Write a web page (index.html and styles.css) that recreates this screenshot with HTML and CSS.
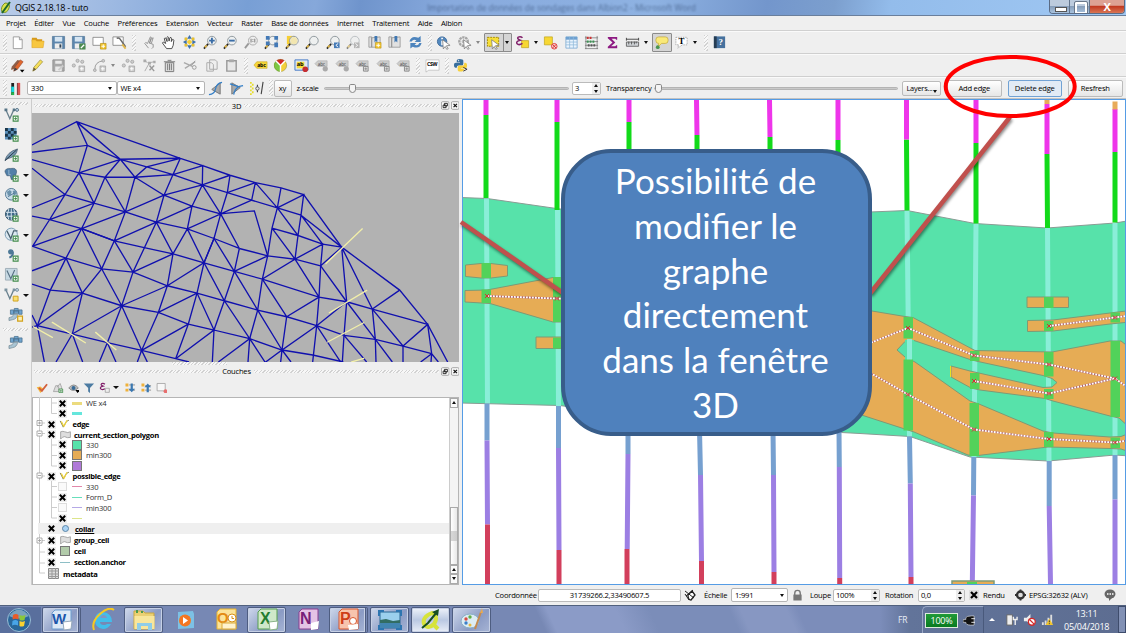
FILE: index.html
```html
<!DOCTYPE html>
<html lang="fr">
<head>
<meta charset="utf-8">
<title>QGIS 2.18.18 - tuto</title>
<link rel="stylesheet" href="styles.css">
</head>
<body>
<svg class="defs" aria-hidden="true">
<defs>
<symbol id="page" viewBox="0 0 16 16"><path d="M3.500 2h6.500l3 3v9.500h-9.500z" fill="#fff" stroke="#888" stroke-width=".8"/><path d="M10 2v3h3" fill="#ddd" stroke="#888" stroke-width=".8"/></symbol>
<symbol id="folder" viewBox="0 0 16 16"><path d="M2 3h5l1 1.500h5V7H2z" fill="#d79b1d"/><path d="M2 13.500V5h4l1 1.500h8l-1 7z" fill="#f8c740" stroke="#d79b1d" stroke-width=".5"/></symbol>
<symbol id="disk" viewBox="0 0 16 16"><path d="M1.500 1.500h13v13h-13z" fill="#5c86ad" stroke="#41678c" stroke-width=".6"/><path d="M4 2h8v5H4z" fill="#d6e5f2"/><path d="M4 9h8v5.500H4z" fill="#eee"/><path d="M9 10h2v3.500H9z" fill="#345"/></symbol>
<symbol id="disk2" viewBox="0 0 16 16"><use href="#disk"/><path d="M9 9h6.500v6.500H9z" fill="#4b8b50"/><path d="M10.500 14l3.500-3.500" stroke="#fff" stroke-width="1.500"/></symbol>
<symbol id="composer" viewBox="0 0 16 16"><path d="M1 2.500h11v8.500H1z" fill="#fff" stroke="#777" stroke-width=".8"/><path d="M9 9h6v6H9z" fill="#f2c62e" stroke="#b58c10" stroke-width=".7"/><path d="M12 10v4M10 12h4" stroke="#fff"/></symbol>
<symbol id="manager" viewBox="0 0 16 16"><path d="M1 2h11v9H1z" fill="#fff" stroke="#777" stroke-width=".8"/><path d="M5 3.500q3-1 4 1.500l5.500 7.500" fill="none" stroke="#666" stroke-width="1.500"/><path d="M11 10l3.500 4.500" stroke="#e0b74b" stroke-width="1.900"/></symbol>
<symbol id="touch" viewBox="0 0 16 16"><path d="M8 14L4 9l1-1 2 1 3-7 1 .5-2 6 4 1.500v3l-1.500 1.500M9 9l2-5 2-1-2 6" fill="#eee" stroke="#888" stroke-width=".9"/></symbol>
<symbol id="hand" viewBox="0 0 16 16"><path d="M6 14.500L1.500 8.500l1-1L5 9 3.500 4q.5-1.500 1.700-.5L6.500 7 6.300 2.500q.8-1.500 1.700 0l.6 4L9.500 3q1.200-1.200 1.700.4L11 7l1-2q1.400-.7 1.700.6L13 11l-1.500 3.500z" fill="#fff" stroke="#333" stroke-width=".9"/></symbol>
<symbol id="pan" viewBox="0 0 16 16"><path d="M8 4.500l3 3-3 3-3-3z" fill="#f6cf35"/><g fill="#3c71b0"><path d="M8 0l2.500 4h-5zM8 15l2.500-4h-5zM1 7.500L5 5v5zM15 7.500L11 5v5z"/></g><path d="M3 3h2.500v2.500H3zM10.500 3H13v2.500h-2.500zM3 9.500h2.500V12H3zM10.500 9.500H13V12h-2.500z" fill="#f6cf35" stroke="#c09b16" stroke-width=".4"/></symbol>
<symbol id="lens" viewBox="0 0 16 16"><path d="M5.500 9.500L1 14.500" stroke="#222" stroke-width="1.800"/><path d="M4 11l-2 2.300" stroke="#ddb54a" stroke-width="2"/><circle cx="9.500" cy="6" r="4.600" fill="#eef0f0" stroke="#8c959b"/></symbol>
<symbol id="zin" viewBox="0 0 16 16"><use href="#lens"/><path d="M9.500 3v6M6.500 6h6" stroke="#3a6da7" stroke-width="2"/></symbol>
<symbol id="zout" viewBox="0 0 16 16"><use href="#lens"/><path d="M6.500 6h6" stroke="#3a6da7" stroke-width="2"/></symbol>
<symbol id="zone" viewBox="0 0 16 16"><path d="M5 9L1 14" stroke="#999" stroke-width="2"/><circle cx="9.500" cy="6" r="4.700" fill="#eee" stroke="#aaa"/><path d="M7.500 4v4M9.500 4.500v1M9.500 6.500v1M11.500 4v4" stroke="#777"/></symbol>
<symbol id="zfull" viewBox="0 0 16 16"><use href="#lens"/><path d="M2 1h4v4H2zM11 1h4v4h-4zM2 7h4v4H2zM11 8h4v5h-4z" fill="#4379b6"/></symbol>
<symbol id="zsel" viewBox="0 0 16 16"><path d="M2 1h8v9H2z" fill="#f6cf35"/><use href="#lens"/><circle cx="9.500" cy="6" r="3.800" fill="#f2e6b0"/></symbol>
<symbol id="zprev" viewBox="0 0 16 16"><use href="#lens"/><path d="M8.500 8h6v6h-6z" fill="#4379b6"/><path d="M13 9l-2.500 2 2.500 2" fill="none" stroke="#fff"/></symbol>
<symbol id="znext" viewBox="0 0 16 16"><g opacity=".55"><use href="#lens"/><path d="M8.500 8h6v6h-6z" fill="#888"/><path d="M10 9l2.500 2-2.500 2" fill="none" stroke="#fff"/></g></symbol>
<symbol id="book" viewBox="0 0 16 16"><path d="M2 2h3v11H2zM5 3l9-1v11H5z" fill="#e1e1e1" stroke="#8d8d8d" stroke-width=".8"/><path d="M8 1h3v7L9.500 6.500 8 8z" fill="#4178b2"/></symbol>
<symbol id="booknew" viewBox="0 0 16 16"><use href="#book"/><path d="M9 8h6v6H9z" fill="#f3c72c" stroke="#b58c10" stroke-width=".6"/><path d="M12 9v4M10 11h4" stroke="#fff"/></symbol>
<symbol id="refresh" viewBox="0 0 16 16"><path d="M1.500 7q2-7 9.500-4l2.500-2V7.500H7l2-2Q5 4 4 7zM14.500 8.500q-2 7-9.500 4l-2.500 2V8.500H9l-2 2q4 1.500 5-2z" fill="#4d84bd"/></symbol>
<symbol id="cursor" viewBox="0 0 16 16"><path d="M6 5l8 6-4 .5 2 3-1.500.8-1.700-3-2 2.500z" fill="#fff" stroke="#777" stroke-width=".8"/></symbol>
<symbol id="info" viewBox="0 0 16 16"><circle cx="6.500" cy="7" r="5" fill="#5289c0" stroke="#416c9b"/><path d="M6.500 6v5M6.500 3v1.500" stroke="#fff" stroke-width="1.800"/><use href="#cursor" x="1"/></symbol>
<symbol id="gear" viewBox="0 0 16 16"><circle cx="7" cy="7" r="4.500" fill="#eee" stroke="#a5a5a5" stroke-width="2.500" stroke-dasharray="2.500 .7"/><circle cx="7" cy="7" r="2" fill="#bbb"/><use href="#cursor" x="1"/></symbol>
<symbol id="select" viewBox="0 0 16 16"><path d="M1.500 2.500h12v9.500h-12z" fill="#f7de35" stroke="#a58b00" stroke-dasharray="2 1"/><use href="#cursor"/></symbol>
<symbol id="eps" viewBox="0 0 16 16"><path d="M8 3Q6 1 3.500 2.200 1.500 4 5.500 5.500 1 6.500 2 9q2 2.500 6 0" fill="none" stroke="#82216b" stroke-width="1.600"/></symbol>
<symbol id="expr" viewBox="0 0 16 16"><path d="M7 6h7.500v7.500H7z" fill="#f7d733" stroke="#bb9e14" stroke-width=".7"/><use href="#eps"/></symbol>
<symbol id="desel" viewBox="0 0 16 16"><path d="M1.500 2h8.500v8.500H1.500z" fill="#f7d733" stroke="#bba011" stroke-width=".7"/><circle cx="12" cy="12" r="3" fill="#f4caca" stroke="#d44"/><path d="M10 10l4 4M14 10l-4 4" stroke="#d33"/></symbol>
<symbol id="table" viewBox="0 0 16 16"><path d="M2 2h12v12H2z" fill="#eaf4fd" stroke="#72a3cf" stroke-width=".8"/><path d="M2 2h12v3H2z" fill="#6ea1d1"/><path d="M2 7.500h12M2 10.500h12M6 2v12M10 2v12" stroke="#8eb8da" stroke-width=".8"/></symbol>
<symbol id="abacus" viewBox="0 0 16 16"><path d="M1 3h14M1 7h14M1 11h14M1 14.500h14M2 1v14M14 1v14" stroke="#777" stroke-width=".8"/><g stroke-width="2.500"><path d="M3 3h6" stroke="#c33" stroke-dasharray="2 1"/><path d="M3 7h9" stroke="#3b9353" stroke-dasharray="2 1"/><path d="M4 11h8" stroke="#555" stroke-dasharray="2 1"/></g></symbol>
<symbol id="sigma" viewBox="0 0 16 16"><path d="M13 5V2H3v1.500L8 8l-5 4.500V14h10v-3h-1l-1 1H6.500L11 8 7 4h4l1 1z" fill="#8d1a82"/></symbol>
<symbol id="ruler" viewBox="0 0 16 16"><path d="M1.500 4.500h13M1.500 3v3M14.500 3v3" stroke="#444"/><path d="M1.500 7.500h13v4.500h-13z" fill="#cfd3d7" stroke="#666"/><path d="M4 7v3M7 7v3M10 7v3M12 7v2" stroke="#555"/></symbol>
<symbol id="tip" viewBox="0 0 16 16"><path d="M5 2h7q3 0 3 3v1q0 3-3 3H8l-4 4 1-4Q2 9 2 6V5q0-3 3-3z" fill="#f9e978" stroke="#c0a331" stroke-width=".7"/><circle cx="4" cy="13" r="2" fill="#4b954e"/></symbol>
<symbol id="textann" viewBox="0 0 16 16"><path d="M2 2.500h12v8H9l-5 3.500 1-3.500H2z" fill="#fff" stroke="#aaa" stroke-dasharray="1.500 1"/><text x="4.700" y="9.500" font-size="9.500" class="serif">T</text></symbol>
<symbol id="help" viewBox="0 0 16 16"><path d="M2 1.500h12v12.500H2z" fill="#46719e"/><path d="M2 1.500h3v12.500H2z" fill="#263d53"/><text x="7" y="11" font-size="9.500" fill="#fff" class="serif">?</text></symbol>
<symbol id="pencil" viewBox="0 0 16 16"><path d="M3 14l1-4 7-8 2.500 2-7 8z" fill="#f6df59" stroke="#91832c" stroke-width=".7"/><path d="M3 14l1-4 2.500 2z" fill="#665b3f"/></symbol>
<symbol id="pencils" viewBox="0 0 16 16"><path d="M1 12.500L2 9l6-7 3 1-7 9z" fill="#8d5e49"/><path d="M4 14l1-4 6-8 3 2-6 8z" fill="#df672d" stroke="#974026" stroke-width=".6"/><path d="M4 14l1-4 3 2z" fill="#444"/><path d="M10.500 12.500h5l-2.500 3z"/></symbol>
<symbol id="gdisk" viewBox="0 0 16 16"><path d="M2 2h12v12H2z" fill="#a9a9a9" stroke="#929292"/><path d="M4.500 3h7v3h-7zM4.500 9h7v5h-7z" fill="#e9e9e9"/><path d="M8 13l5-5" stroke="#ccc" stroke-width="2"/></symbol>
<symbol id="addfeat" viewBox="0 0 16 16"><g fill="#ccc" stroke="#999" stroke-width=".7"><circle cx="3" cy="8" r="1.700"/><circle cx="7" cy="3" r="1.700"/><circle cx="12" cy="4" r="1.700"/><path d="M8.500 8.500h6v6h-6z"/></g><path d="M11.500 9.500v4M9.500 11.500h4" stroke="#fff"/></symbol>
<symbol id="curve" viewBox="0 0 16 16"><path d="M3 12Q3 4 12 3" fill="none" stroke="#999"/><g fill="#ccc" stroke="#999" stroke-width=".7"><circle cx="3" cy="13" r="1.500"/><circle cx="12" cy="3" r="1.500"/><path d="M8.500 8.500h6v6h-6z"/></g><path d="M11.500 9.500v4M9.500 11.500h4" stroke="#fff"/></symbol>
<symbol id="node" viewBox="0 0 16 16"><path d="M3 14L8 5l5-1M3 3l3 2" stroke="#aaa" fill="none"/><path d="M1.500 1.500h3v3h-3zM6.500 4h3v3h-3zM12 3h2.500v2.500H12z" fill="#aaa"/><path d="M8 8l5 6M13 8l-5 5" stroke="#999" stroke-width="1.500"/></symbol>
<symbol id="trash" viewBox="0 0 16 16"><path d="M3.500 5h9v9.500h-9z" fill="#ddd" stroke="#777"/><path d="M2 4h12M6 2.500h4M6 6v7M8 6v7M10 6v7" stroke="#777"/></symbol>
<symbol id="cut" viewBox="0 0 16 16"><path d="M1 5l9 4M2 11l11-7" stroke="#aaa" stroke-width="1.500"/><circle cx="12" cy="10" r="2" fill="none" stroke="#999"/><path d="M9 8l4-5" stroke="#999"/></symbol>
<symbol id="copy" viewBox="0 0 16 16"><path d="M6 2h6l2 2v8H6zM3 5h5l2 2v7H3z" fill="#eee" stroke="#aaa"/></symbol>
<symbol id="paste" viewBox="0 0 16 16"><path d="M3 3h10v11H3z" fill="#e8e8e8" stroke="#999" stroke-width="1.500"/><path d="M5.500 1.500h5v3h-5z" fill="#aaa"/></symbol>
<symbol id="abc" viewBox="0 0 16 16"><path d="M4 4h11v7H4L1 7.500z" fill="#f6d63c" stroke="#c6a418" stroke-width=".6"/><text x="4.500" y="9.500" font-size="5.500" font-weight="bold">abc</text></symbol>
<symbol id="pie" viewBox="0 0 16 16"><path d="M8 8L3 3q5-4 10 0z" fill="#d52824"/><path d="M8 8l5-5q4 6-1 10l-4 2z" fill="#f4d03b"/><path d="M8 8v7Q0 13 1 6l2-3z" fill="#7bc843"/><circle cx="8" cy="8" r="6.500" fill="none" stroke="#8a863a" stroke-width=".5"/><path d="M8 8v7M8 8L3 3M8 8l5-5" stroke="#fff" stroke-width="1.500"/></symbol>
<symbol id="abpin" viewBox="0 0 16 16"><path d="M1 2h14v11H1z" fill="#e0e7f2" stroke="#4178c4"/><path d="M3 4h8v7H3z" fill="#f6dc39"/><text x="3" y="9" font-size="6" font-weight="bold">ab</text><circle cx="12" cy="12" r="3" fill="#c52d30"/></symbol>
<symbol id="gabc" viewBox="0 0 16 16"><path d="M4 3h10v6H4L1 6z" fill="#ccc" stroke="#aaa" stroke-width=".6"/><text x="4" y="8" font-size="5" fill="#444">abc</text><circle cx="12" cy="11.500" r="2.800" fill="#aaa"/></symbol>
<symbol id="gabcsq" viewBox="0 0 16 16"><path d="M4 3h10v6H4L1 6z" fill="#ccc" stroke="#aaa" stroke-width=".6"/><text x="4" y="8" font-size="5" fill="#444">abc</text><path d="M9 9h5v5H9z" fill="#ddd" stroke="#888"/><path d="M11.500 10v3M10 11.500h3" stroke="#888" stroke-width=".8"/></symbol>
<symbol id="csw" viewBox="0 0 16 16"><path d="M1 2h14v11H4l-3 2z" fill="#fff" stroke="#aaa" stroke-width=".6"/><text x="2" y="8.500" font-size="5.500" font-weight="bold">CSW</text></symbol>
<symbol id="python" viewBox="0 0 16 16"><path d="M4 3q0-2 3-2 4 0 4 2v3q0 2-2 2H6q-2 0-2 2.500H2.500Q1 10 1 7.500T3 5h4.500V4.500H4z" fill="#386e9d"/><path d="M12 5h1q2 0 2 3t-2 3H8.500v.5H12q0 3-4 3-3 0-3-2V10q0-2 2-2h3q2 0 2-2z" fill="#f7d13d"/><circle cx="6" cy="2.800" r=".6" fill="#fff"/><path d="M11 10l4 2-4 2" fill="none" stroke="#333"/></symbol>
<symbol id="plus" viewBox="0 0 16 16"><path d="M9.500 9.500h5v5h-5z" fill="#fff" stroke="#438c4c" stroke-width="1.200"/><path d="M12 10.500v3M10.500 12h3" stroke="#438c4c"/></symbol>
<symbol id="vec" viewBox="0 0 16 16"><path d="M2 3l4 9 4-9h3" fill="none" stroke="#68808d" stroke-width="1.300"/><path d="M.5 1.500h3v3h-3zM9 1.500h2.500v3H9z" fill="#567486"/><circle cx="13.500" cy="3" r="1.500" fill="#c7d9e8" stroke="#567486"/><use href="#plus"/></symbol>
<symbol id="raster" viewBox="0 0 16 16"><path d="M1 1h12v12H1z" fill="#5b90bb"/><path d="M1 1h3v3H1zM7 1h3v3H7zM4 4h3v3H4zM10 4h3v3h-3zM1 7h3v3H1zM7 7h3v3H7zM4 10h3v3H4z" fill="#193549"/><use href="#plus"/></symbol>
<symbol id="feather" viewBox="0 0 16 16"><path d="M1 14Q3 5 14 2 13 10 4 12z" fill="#7898b1" stroke="#41566a" stroke-width=".7"/><path d="M1 14L13 3" stroke="#263b4c"/><use href="#plus"/></symbol>
<symbol id="eleph" viewBox="0 0 16 16"><path d="M1 5q0-4 6-3.500 6-1 6 3.500l-1 4-2-1v5H7.500l-1-4H3z" fill="#517fa8" stroke="#37536a" stroke-width=".6"/><path d="M5 3v5h2" fill="none" stroke="#b6cede" stroke-width=".7"/><use href="#plus"/></symbol>
<symbol id="globe" viewBox="0 0 16 16"><circle cx="7.500" cy="7.500" r="6" fill="#c9dce9" stroke="#557a95"/><path d="M3 5l3-2 2 2-1 3-3 1zM9 4l3-1 1 4-3 2z" fill="#6c93ad"/><path d="M4 10l7-4" stroke="#4e7692"/><use href="#plus"/></symbol>
<symbol id="globev" viewBox="0 0 16 16"><circle cx="7.500" cy="7.500" r="6.300" fill="#dce8f0" stroke="#7c9db5"/><path d="M3 4l4 8 3-8h4" fill="none" stroke="#4a6170" stroke-width="1.300"/><use href="#plus"/></symbol>
<symbol id="globed" viewBox="0 0 16 16"><circle cx="7.500" cy="7.500" r="6" fill="#3f6a8a" stroke="#34536a"/><path d="M2 5.500h11M2 9.500h11M7.500 1.500v12M5 2q-3 6 0 11M10 2q3 6 0 11" fill="none" stroke="#d7e5ee"/><use href="#plus"/></symbol>
<symbol id="comma" viewBox="0 0 16 16"><circle cx="7" cy="5" r="2.800" fill="#4e7997"/><path d="M9 5q1 4-3.500 6" fill="none" stroke="#4e7997" stroke-width="2"/><use href="#plus"/></symbol>
<symbol id="vecsq" viewBox="0 0 16 16"><path d="M1.500 1.500h12v12h-12z" fill="#c6d8e2" stroke="#a0b0b8"/><path d="M3 3.500l4 8.500 4-9" fill="none" stroke="#587184" stroke-width="1.200"/><use href="#plus"/></symbol>
<symbol id="vecy" viewBox="0 0 16 16"><path d="M2 3l4 9 4-9h3" fill="none" stroke="#68808d" stroke-width="1.300"/><path d="M.5 1.500h3v3h-3zM9 1.500h2.500v3H9z" fill="#7b929f"/><circle cx="13.500" cy="3" r="1.500" fill="#c7d9e8" stroke="#7b929f"/><path d="M9.500 9.500h5v5h-5z" fill="#f8df71" stroke="#d2a21c"/></symbol>
<symbol id="virt" viewBox="0 0 16 16"><path d="M2.500 3h3.500v4.500H2.500zM6 4h5v2.500H6zM11 3h3.500v4.500H11zM6.500 1.500h4v2.500h-4z" fill="#70a5cf" stroke="#49718f" stroke-width=".8"/><path d="M6 7.500h4q-1 5-5 5.500l-4 1v-3q4 0 5-3.500z" fill="#a9c5d4" stroke="#6f8490" stroke-width=".7"/></symbol>
<symbol id="virty" viewBox="0 0 16 16"><use href="#virt"/><path d="M10 9.500h5v5h-5z" fill="#fff0b3" stroke="#d2a21c" stroke-width="1.300"/></symbol>
<symbol id="edgeicon" viewBox="0 0 16 16"><path d="M1 3l5 10 5-9 4-2" fill="none" stroke="#737340" stroke-width="1.400"/><path d="M3 4l4 8M12 2L7 12" stroke="#efd33b" stroke-width="2"/></symbol>
<symbol id="poly" viewBox="0 0 16 12"><path d="M2 2q3-1 5 0 4 2 7 0v7q-4 1-7-1-3 0-5 3z" fill="#dedede" stroke="#999"/></symbol>
<symbol id="xmark" viewBox="0 0 10 10"><path d="M2 2l6 6M8 2L2 8" stroke="#000" stroke-width="2.200"/></symbol>
<symbol id="dock" viewBox="0 0 10 10"><rect x=".5" y=".5" width="9" height="9" rx="1.500" fill="#f8f8f8" stroke="#999"/><path d="M4 2.500h3.500v3H4zM2.500 4.500H6v3H2.500z" fill="#fff" stroke="#111"/></symbol>
<symbol id="close" viewBox="0 0 10 10"><rect x=".5" y=".5" width="9" height="9" rx="1.500" fill="#f8f8f8" stroke="#999"/><path d="M3 3l4 4M7 3L3 7" stroke="#111" stroke-width="1.400"/></symbol>
</defs>
</svg>

<header class="titlebar">
  <svg class="logo" viewBox="0 0 12 14"><path d="M5 2Q0 6 2 11q5 2 7-4 2-5-4-5z" fill="#dbe34a" stroke="#799326"/><path d="M2 12L10 1" stroke="#1d672d" stroke-width="2"/></svg>
  <span class="title">QGIS 2.18.18 - tuto</span>
  <span class="ghost">Importation de données de sondages dans Albion2 - Microsoft Word</span>
  <div class="winbtns"><i class="min"></i><i class="max"></i><i class="x">X</i></div>
</header>
<nav class="menu"><span>Projet</span><span>Éditer</span><span>Vue</span><span>Couche</span><span>Préférences</span><span>Extension</span><span>Vecteur</span><span>Raster</span><span>Base de données</span><span>Internet</span><span>Traitement</span><span>Aide</span><span>Albion</span></nav>

<div class="bar">
  <i class="grip"></i>
  <svg><use href="#page"/></svg><svg><use href="#folder"/></svg><svg><use href="#disk"/></svg><svg><use href="#disk2"/></svg><svg><use href="#composer"/></svg><svg><use href="#manager"/></svg>
  <i class="grip wide"></i>
  <svg><use href="#touch"/></svg><svg><use href="#hand"/></svg><svg><use href="#pan"/></svg><svg><use href="#zin"/></svg><svg><use href="#zout"/></svg><svg><use href="#zone"/></svg><svg><use href="#zfull"/></svg><svg><use href="#zsel"/></svg><svg><use href="#lens"/></svg><svg><use href="#zprev"/></svg><svg><use href="#znext"/></svg><svg><use href="#booknew"/></svg><svg><use href="#book"/></svg><svg><use href="#refresh"/></svg>
  <i class="grip wide"></i>
  <svg><use href="#info"/></svg><svg><use href="#gear"/></svg><b class="dd dim"></b>
  <span class="pressed"><svg><use href="#select"/></svg><b class="dd"></b></span>
  <svg><use href="#expr"/></svg><b class="dd mid"></b><svg><use href="#desel"/></svg><svg><use href="#table"/></svg><svg><use href="#abacus"/></svg><svg><use href="#sigma"/></svg><svg><use href="#ruler"/></svg><b class="dd"></b>
  <span class="pressed one"><svg><use href="#tip"/></svg></span><svg><use href="#textann"/></svg><b class="dd"></b>
  <i class="grip wide far"></i><svg><use href="#help"/></svg>
</div>
<div class="bar">
  <i class="grip"></i>
  <svg><use href="#pencils"/></svg><svg><use href="#pencil"/></svg><svg><use href="#gdisk"/></svg><svg><use href="#addfeat"/></svg><svg><use href="#curve"/></svg><b class="dd dim ten"></b><svg><use href="#addfeat"/></svg><svg><use href="#node"/></svg><svg><use href="#trash"/></svg><svg><use href="#cut"/></svg><svg><use href="#copy"/></svg><svg><use href="#paste"/></svg>
  <i class="grip wide"></i>
  <svg><use href="#abc"/></svg><svg><use href="#pie"/></svg><svg><use href="#abpin"/></svg><svg><use href="#gabc"/></svg><svg><use href="#gabc"/></svg><svg><use href="#gabcsq"/></svg><svg><use href="#gabcsq"/></svg><svg><use href="#gabcsq"/></svg>
  <i class="grip wide"></i><svg><use href="#csw"/></svg><i class="grip wide"></i><svg><use href="#python"/></svg>
</div>
<div class="bar albion">
  <i class="grip"></i>
  <svg viewBox="0 0 16 16"><path d="M5 2v13M11 2v13" stroke-width="3" stroke="#222"/><path d="M5 6v6" stroke="#14d9df" stroke-width="3"/><path d="M5 12v3" stroke="#26b44a" stroke-width="3"/><path d="M11.500 2v13" stroke="#d95555" stroke-width="3"/></svg>
  <span class="combo c1">330<b class="dd"></b></span><span class="combo c2">WE x4<b class="dd"></b></span>
  <span class="sections">
  <svg viewBox="0 0 16 16"><path d="M13 2v12L4 9z" fill="#aaa" stroke="#777"/><path d="M1 14.500q6 0 7-6t7-7" fill="none" stroke="#347fc7" stroke-width="1.300"/></svg>
  <svg viewBox="0 0 16 16"><path d="M3 2v12l9-7z" fill="#aaa" stroke="#777"/><path d="M1 3l9 3 5-1M5 14.500q1-6 5-8" fill="none" stroke="#347fc7" stroke-width="1.300"/></svg>
  <svg viewBox="0 0 16 16"><path d="M2 1v14M4 3v12" stroke="#e8dd28" stroke-width="1.800" stroke-dasharray="2 2"/><path d="M9 4v8M15 1l-2 13" stroke="#444" stroke-width="1.200"/><circle cx="9" cy="8" r="1.800" fill="#eee" stroke="#555"/></svg></span>
  <i class="grip"></i><span class="btn xy">xy</span><span class="lbl z">z-scale</span>
  <span class="slider s1"><i></i></span><span class="spin s3">3<b></b></span><span class="lbl tr">Transparency</span><span class="slider s2"><i></i></span>
  <span class="btn layers">Layers...<b class="dd"></b></span><span class="btn edge">Add edge</span><span class="btn edge hot">Delete edge</span><span class="btn edge">Resfresh</span>
</div>

<main class="work">
  <aside class="left"><i class="hgrip"></i>
    <div><svg><use href="#vec"/></svg></div><div><svg><use href="#raster"/></svg></div><div><svg><use href="#feather"/></svg></div><div><svg><use href="#eleph"/></svg><b class="dd"></b></div><div><svg><use href="#globe"/></svg><b class="dd"></b></div><div><svg><use href="#globed"/></svg></div><div><svg><use href="#globev"/></svg><b class="dd"></b></div><div><svg><use href="#comma"/></svg></div><div><svg><use href="#vecsq"/></svg></div><div><svg><use href="#vecy"/></svg><b class="dd"></b></div><div class="in"><svg><use href="#virty"/></svg></div>
    <i class="hgrip low"></i><div class="in"><svg><use href="#virt"/></svg></div>
  </aside>
  <section class="docks">
    <div class="docktitle"><i></i><span>3D</span><i></i><svg><use href="#dock"/></svg><svg><use href="#close"/></svg></div>
    <svg class="mesh" viewBox="96 38 1281 748" preserveAspectRatio="none">
      <g fill="none" stroke="#1010ae" stroke-width="4">
      <path d="M230 64L541 174 608 196 690 225 766 247 843 263 911 283 1025 441 1199 570 1283 673 1343 786M96 134L230 64 262 135 96 156M230 64L361 177 541 174M233 68L361 177M262 135L361 177M262 135L237 218M96 178L237 218 315 231 405 231 519 223 541 174M361 177L237 218M361 177L315 231M361 177L405 231 440 200 541 174M361 177L440 200 519 223 607 254M519 223L608 196 607 254 690 225M607 254L682 277 766 247M682 277L755 300"/>
      <path d="M96 204L195 283 96 323M237 218L195 283 149 358 98 438M237 218L282 309 195 283M315 231L282 309 245 385 198 474 151 570 112 677M315 231L376 335 282 309 149 358M405 231L376 335 343 422 305 506 247 579 217 702M405 231L492 285 519 223M607 254L492 285 576 318 607 254 662 341 576 318M492 285L376 335 469 366 492 285M682 277L662 341 755 300M690 225L682 277M96 348L149 358 245 385 343 422 436 443 519 461 612 488 703 514M98 438L245 385 376 335M343 422L469 366 576 318 562 386 662 341 642 415 612 488 591 579 565 672 527 776M469 366L562 386 642 415 718 445M662 341L718 445M662 341L690 338 763 332 803 467"/>
      <path d="M96 438L198 474 305 506 399 516 502 557 591 579 673 602 749 716M96 512L198 474 247 579 365 617 475 637 565 672 642 690M96 552L151 570 247 579 112 677 217 702 322 728 425 751 527 776 567 786M245 385L305 506 365 617 425 751M245 385L343 422 399 516 469 366 519 461 562 386 612 488 642 415 703 514 718 445M399 516L519 461 502 557 475 637 425 751 565 672M399 516L365 617 322 728M365 617L217 702M365 617L502 557 612 488 673 602 703 514M475 637L591 579 642 690 749 716M673 602L642 690 527 776M642 690L637 786M673 602L773 630"/>
      <path d="M96 645L112 677 133 786M96 681L112 677M217 702L168 786M217 702L248 786M322 728L298 786M322 728L348 786M425 751L412 786M425 751L442 786M655 786L749 716 744 786M749 716L846 750 938 765 1030 786M749 716L795 786M797 786L846 750 842 786M846 750L873 786"/>
      <path d="M766 247L755 300 832 323 903 345 968 432 1025 441M766 247L832 323 843 263M832 323L911 283 903 345 894 406 968 432M832 323L816 384 803 467 787 537 773 630 749 716M832 323L894 406 885 477 803 467 718 445M816 384L894 406M816 384L885 477 968 432 962 497 885 477 787 537 703 514 803 467M903 345L1025 441 962 497 957 591 950 677 938 786M1025 441L1040 605 1032 706 1027 786M1025 441L1117 627 1199 570M885 477L957 591 1040 605 1117 627 1283 673M787 537L957 591 860 650 950 677 1032 706 1126 718 1209 738 1295 761"/>
      <path d="M962 497L1040 605 1126 718 1177 786M1040 605L950 677 846 750 860 650 787 537M703 514L773 630 860 650M773 630L846 750M1117 627L1126 718 1128 786M1117 627L1209 738 1283 673 1295 761 1315 786M1209 738V786M1295 761L1262 786M1295 761L1293 786M950 677L1022 786M1032 706L1100 786"/></g>
      <g stroke="#f2efa9" stroke-width="4" stroke-linecap="round"><path d="M978 490L1087 386M988 638L1100 571M983 726L1091 668M1055 786L1091 775M100 680L157 712M157 667L256 728M287 697L348 749"/></g>
    </svg>
    <i class="splitgrip"></i>
    <div class="docktitle second"><i></i><span>Couches</span><i></i><svg><use href="#dock"/></svg><svg><use href="#close"/></svg></div>
    <div class="layertools">
      <svg viewBox="0 0 16 16"><path d="M1 7l5-1 4 3-4 6z" fill="#f5b83d"/><path d="M4 8l4 4 7-9" fill="none" stroke="#d3603c" stroke-width="2.500"/></svg>
      <svg viewBox="0 0 16 16"><path d="M2 13l3-8h3l2 8zM7 7l4-5 2 5v6" fill="#ddd" stroke="#999"/><use href="#plus"/></svg>
      <svg viewBox="0 0 16 16"><path d="M1 8q7-8 13 0-7 7-13 0z" fill="#bbb" stroke="#777"/><circle cx="7.500" cy="8" r="2.700" fill="#376b98"/><path d="M10 11h6l-3 4z"/></svg>
      <svg viewBox="0 0 16 16"><path d="M1 2h14L9.500 8v7L7 13V8z" fill="#4c7ba2"/></svg>
      <svg viewBox="0 0 16 16"><use href="#eps"/><path d="M8.500 8.500h5.500v5.500H8.500z" fill="#eee" stroke="#999"/></svg><b class="dd"></b>
      <svg viewBox="0 0 16 16"><path d="M2 2h4v4H2zM2 9h4v4H2z" fill="#efb13b"/><path d="M7 4h8M7 11h8" stroke="#777"/><path d="M9 2h3v7h3l-4.500 5L6 9h3z" fill="#3b78b1"/></svg>
      <svg viewBox="0 0 16 16"><path d="M2 2h4v4H2zM2 9h4v4H2z" fill="#efb13b"/><path d="M7 5h8M7 11h8" stroke="#777"/><path d="M9 14h3V7h3l-4.500-5L6 7h3z" fill="#3b78b1"/></svg>
      <svg viewBox="0 0 16 16"><path d="M1.500 2h11v10h-11z" fill="#f7f7f7" stroke="#999"/><circle cx="13" cy="12.500" r="2.700" fill="#e76e6e"/></svg>
    </div>
    <div class="tree">
      <svg class="guides" viewBox="0 0 50 187"><g fill="none" stroke="#ccc" stroke-width="1"><path d="M6.500 0V176H12M6.500 26H12M6.500 36.500H12M6.500 79H12M6.500 132H12M6.500 143.500H12M6.500 155H12M6.500 166H12M18.500 0V16.500H24M18.500 6H24M18.500 42V69H24M18.500 48H24M18.500 58.500H24M18.500 84V121H24M18.500 89.500H24M18.500 100H24M18.500 110.500H24"/></g><g fill="#fff" stroke="#999" stroke-width=".8"><path d="M4 23.500h5v5h-5zM4 34h5v5h-5zM4 76h5v5h-5zM4 141h5v5h-5z"/><path d="M5 26h3M6.500 24.500v3M5 36.500h3M5 78.500h3M5 143.500h3M6.500 142v3"/></g></svg>
      <div class="rows">
        <p class="k"><svg class="cb"><use href="#xmark"/></svg><i class="ln yel"></i>WE x4</p>
        <p class="k"><svg class="cb"><use href="#xmark"/></svg><i class="ln cya"></i></p>
        <p><svg class="cb"><use href="#xmark"/></svg><svg class="gi"><use href="#edgeicon"/></svg><b>edge</b></p>
        <p><svg class="cb"><use href="#xmark"/></svg><svg class="gi big"><use href="#poly"/></svg><b>current_section_polygon</b></p>
        <p class="k"><svg class="cb"><use href="#xmark"/></svg><i class="sw g"></i>330</p>
        <p class="k"><svg class="cb"><use href="#xmark"/></svg><i class="sw o"></i>min300</p>
        <p class="k"><svg class="cb"><use href="#xmark"/></svg><i class="sw p"></i></p>
        <p><svg class="cb"><use href="#xmark"/></svg><svg class="gi"><use href="#edgeicon"/></svg><b>possible_edge</b></p>
        <p class="k"><i class="cb off"></i><i class="ln thin pink"></i>330</p>
        <p class="k"><svg class="cb"><use href="#xmark"/></svg><i class="ln thin mint"></i>Form_D</p>
        <p class="k"><i class="cb off"></i><i class="ln thin lilac"></i>min300</p>
        <p class="k"><svg class="cb"><use href="#xmark"/></svg><i class="ln thin lime"></i></p>
        <p class="t sel"><svg class="cb"><use href="#xmark"/></svg><i class="dot"></i><b><u>collar</u></b></p>
        <p class="t"><svg class="cb"><use href="#xmark"/></svg><svg class="gi big"><use href="#poly"/></svg><b>group_cell</b></p>
        <p class="t"><svg class="cb"><use href="#xmark"/></svg><i class="sw cell"></i><b>cell</b></p>
        <p class="t"><svg class="cb"><use href="#xmark"/></svg><i class="ln thin teal"></i><b>section.anchor</b></p>
        <p class="t"><svg class="meta" viewBox="0 0 11 11"><path d="M.5.500h10v10H.5z" fill="#ddd" stroke="#888"/><path d="M0 3h11M0 6h11M0 8.500h11M4 0v11M7.500 0v11" stroke="#999"/></svg><b>metadata</b></p>
      </div>
      <div class="scroll"><b class="up"></b><i></i><b class="up"></b><b class="down"></b></div>
    </div>
  </section>
  <section class="map">
    <svg viewBox="463 100 662 484" preserveAspectRatio="none">
      <path d="M460 197.500L487 198.500 560 209 620 212H870L907 210.500 975 223.500 1047 228 1115 223 1130 220.500V456L1115 455 1048 461 970 457 910 436.500 860 433.500 700 425 560 405.500 460 403z" fill="#57e2aa" stroke="#8a9c94"/>
      <g fill="none" stroke-width="5">
        <g stroke="#8aeed8"><path d="M486.500 198.500L487.500 403.500M557.500 210L558.500 406M907 210.500L909.500 436.500M976 223.500L974 457M1047.500 228L1049 461M1115 223V455"/></g>
        <g stroke="#12da1a"><path d="M486 115V198M557 122V210M629 122V160M697 135V160M770 137V160M838 140V160M906.500 139.500L907 210.500M976 143V223.500M1047 154L1047.500 228M1115 152V222.500"/></g>
        <g stroke="#ee35ea"><path d="M486 100V115M557 100V122M629 100V122M696.500 100L697 135M769.500 100L770 137M838 100V140M906.500 100V139.500M976 100V143M1047 104V154M1115 109V152"/></g>
        <path d="M1047 100V104M1115 101.500V109.500" stroke="#e8ab59"/>
        <g stroke="#76a0d0"><path d="M487 403.500V440.500M558.500 406V448M628 430V454M699.500 430L700.500 475M773 430L773.500 475M839 430L839.300 467M909.500 436.500L910.300 483.500M973.800 457L973.500 495.500M1049.200 461V506M1115 455V499.500"/></g>
        <g stroke="#9c7fe3"><path d="M487 440.500L487.500 524.500M558.500 448L559 550M628 454L627.200 549M700.500 475L701.500 561M773.500 475L774 572M839.300 467L839.700 578M910.300 483.500L911 577M973.500 495.500L972.300 584M1049.200 506L1050.500 584M1115 499.500V584"/></g>
        <g stroke="#d23f5c"><path d="M487.500 524.500V584M559 550V584M627 549V584M701.500 561V584M774 572V584M839.700 578V584M911 577V584"/></g>
      </g>
      <g fill="#e6ac55" stroke="#7d9a76">
        <path d="M465.500 265L481 263.500H491L507.500 265.500V276L491 278H481L465.500 276.500zM465 290.500L487 290 553 277.500H570V322H553L490 303.500 465 302zM536 337H570V348.500H536zM1027 297H1068.500V307.500H1027zM1027.500 320.500L1053 320 1110 313 1130 310.500V322L1110 324 1053 331 1027.500 331.500z"/>
        <path d="M850 308L872 311 905 316.500 913 317.500 975 350.500 1052 352 1110 341H1121L1130 348V428L1119 418 1110 416 1053 401 1045 398.500 980 390 971 388 951 377V366L970 371 1043 387.500 1052 387 1057 382.500 1052 378.500 1043 375.500 978 361.500 970 359.500 914 340.500 905 341.500 897 350 905 357 915 362 970 401 979 404 1043 431 1053 433 1110 437 1121 436.500 1130 433V452L1121 449 1110 448.500 1048 447 978 455.500 968 455 914 432 863 415.500 850 411z"/>
        <path d="M952 581H994V590H952z" stroke-width="1.500"/>
      </g>
      <path d="M905 340h9v20h-9z" fill="#57e2aa"/><path d="M907 339h5v21h-5z" fill="#8aeed8"/>
      <g fill="#52d25a"><path d="M481.500 263h9.500v15h-9.500zM481.500 289.500h9.500V303h-9.500zM553 277h10v45h-10zM553 337.500h10v11h-10zM903.500 317h9.500v21.500h-9.500zM903.500 359.500h9.500v71h-9.500zM970 351h9.500v10H970zM970 373h9.500v16H970zM969.500 403h9.500v53h-9.500zM1044 297h9.500v11H1044zM1044 321h9.500v10H1044zM1044 352h9.500v24.500H1044zM1044 389h9.500v10H1044zM1044 432h9.500v15H1044zM1110.500 312.500h9.500v10h-9.500zM1110.500 341h9.500v76h-9.500zM1110.500 437.500h9.500v10.500h-9.500zM967 582h10v3h-10z"/></g>
      <g fill="none"><path stroke="#b0656c" stroke-width="1.800" d="M487 296L570 299M860 347L908 328 974 355.500 1049 364.500 1115 378.500 1130 389M860 367L908 394.500 974 429.500 1049 439 1115 442.500 1130 440M974 381L1049 393.500 1115 378.500M1049 326L1115 317.500 1130 315.500"/>
      <path stroke="#fff" stroke-width="1.800" stroke-dasharray="1.800 1.200" d="M487 296L570 299M860 347L908 328 974 355.500 1049 364.500 1115 378.500 1130 389M860 367L908 394.500 974 429.500 1049 439 1115 442.500 1130 440M974 381L1049 393.500 1115 378.500M1049 326L1115 317.500 1130 315.500"/>
      <path stroke="#d72d32" d="M485 294l4 4m0-4l-4 4M555 296.500l4 4m0-4l-4 4M906 326l4 4m0-4l-4 4M906 392.500l4 4m0-4l-4 4M972 353.500l4 4m0-4l-4 4M972 379l4 4m0-4l-4 4M972 427.500l4 4m0-4l-4 4M1047 324l4 4m0-4l-4 4M1047 362.500l4 4m0-4l-4 4M1047 391.500l4 4m0-4l-4 4M1047 437l4 4m0-4l-4 4M1113 315.500l4 4m0-4l-4 4M1113 376.500l4 4m0-4l-4 4M1113 440.500l4 4m0-4l-4 4"/>
      <path d="M950.500 366V377" stroke="#e6e323"/></g>
    </svg>
  </section>
</main>

<footer class="status">
  <span class="lbl w42">Coordonnée</span><span class="field coord">31739266.2,33490607.5</span>
  <svg class="sicon mouse" viewBox="0 0 12 12"><path d="M4 6l4-4 3 4-4 5q-3 0-3-5z" fill="#fff" stroke="#222" stroke-width="1.300"/><path d="M1 2l9 7M2 7l7-6M1 5l4 6" stroke="#222"/></svg>
  <span class="lbl w27">Échelle</span><span class="combo scale">1:991<b class="dd"></b></span>
  <svg class="sicon lock" viewBox="0 0 12 12"><path d="M3 6V4q0-3 3-3t3 3v2" fill="none" stroke="#777" stroke-width="1.500"/><path d="M1.500 5.500h9V12h-9z" fill="#777"/></svg>
  <span class="lbl w23">Loupe</span><span class="spin w47">100%<b></b></span>
  <span class="lbl w33">Rotation</span><span class="spin w47">0,0<b></b></span>
  <svg class="sicon xm" viewBox="0 0 10 10"><use href="#xmark"/></svg><span class="lbl w27">Rendu</span>
  <svg class="sicon crs" viewBox="0 0 12 12"><circle cx="6" cy="6" r="3.800" fill="#ddd" stroke="#333" stroke-width="2.500"/><path d="M6 0v3M6 9v3M0 6h3M9 6h3" stroke="#333" stroke-width="2"/></svg><span class="lbl epsg">EPSG:32632 (ALV)</span>
  <svg class="sicon bub" viewBox="0 0 12 12"><ellipse cx="6" cy="5" rx="5.500" ry="4.500" fill="#666"/><path d="M5 8v4l4-4z" fill="#666"/><path d="M3 5h1.500M5.500 5H7M8 5h1.500" stroke="#fff" stroke-width="1.300"/></svg>
</footer>

<div class="taskbar">
  <div class="start"><svg viewBox="0 0 26 26"><circle cx="13" cy="13" r="11.500" fill="#29679a" stroke="#9abdd5"/><path d="M3 9Q13-4 23 9q-10 5-20 0z" fill="#b1c9d6" opacity=".6"/><path d="M7 8q3-2 5.500 0v4.500q-3-1.500-6 0z" fill="#e85c28"/><path d="M13.500 8q3 1.500 6 0l-1 5q-3 1-5 0z" fill="#8ac83a"/><path d="M6.500 14q3-2 5.500 0v4.500q-3-1.500-6 0z" fill="#49a5e7"/><path d="M13.500 14q3 1.500 5.500 0l-1 5q-3 1-4.500 0z" fill="#f9d330"/></svg></div>
  <div class="task open multi"><svg viewBox="0 0 24 24"><path d="M6 2h16v19H3V5z" fill="#dce9f6" stroke="#6d9dcf"/><text x="3" y="15.500" font-size="15" font-weight="bold" fill="#1c57ab">W</text><path d="M14 14l9-1-1 8-7 1z" fill="#fff" stroke="#9ab"/></svg></div>
  <div class="task"><svg viewBox="0 0 24 24"><path d="M20 16q-3 5-8 5-8-1-8-9t8-8q9 1 9 10H9q0 3 4 3 2 0 3-1z" fill="#43bdeb"/><path d="M9 10h7q-1-3-3.500-3T9 10z" fill="#8096c5"/><path d="M3 22Q0 14 9 6t14-4" fill="none" stroke="#f6c922" stroke-width="2"/></svg></div>
  <div class="task open"><svg viewBox="0 0 24 24"><path d="M2 3h9l2 2h9v16H2z" fill="#ebd073" stroke="#caa640"/><path d="M2.500 8h20v13h-20z" fill="#f8e69c"/><path d="M5 22v-7h15v7h-4v-4H9v4z" fill="#8fcde9"/><path d="M5 2v3M10 3v2" stroke="#4a9a4f" stroke-width="2"/></svg></div>
  <div class="task"><svg viewBox="0 0 24 24"><path d="M5 4l15-1 1 3v14l-16 1z" fill="#7cc1e5"/><circle cx="12" cy="12.500" r="6" fill="#f37722"/><path d="M10 9l5 3.500-5 3.500z" fill="#fff"/></svg></div>
  <div class="task"><svg viewBox="0 0 24 24"><path d="M6 1h16v20H3V4z" fill="#fbe39a" stroke="#e9b431"/><text x="3" y="15" font-size="15" font-weight="bold" fill="#e48b13">O</text><circle cx="18" cy="10" r="4" fill="#fff" stroke="#d69017"/><path d="M18 8v2.500h2" fill="none" stroke="#d69017"/><path d="M8 15h14v6H8z" fill="#fff3ce" stroke="#d9aa3c"/></svg></div>
  <div class="task open"><svg viewBox="0 0 24 24"><path d="M6 1h16v20H3V4z" fill="#cfe8c9" stroke="#579f50"/><text x="5" y="16" font-size="16" font-weight="bold" fill="#237d30">X</text><path d="M14 14l9-1-1 8-7 1z" fill="#fff" stroke="#8bb48a"/></svg></div>
  <div class="task"><svg viewBox="0 0 24 24"><path d="M6 1h16v20H3V4z" fill="#e4c3e5" stroke="#8b3f91"/><text x="4" y="16" font-size="16" font-weight="bold" fill="#782178">N</text><path d="M15 15l8-2-1 8-7 1z" fill="#fff"/></svg></div>
  <div class="task open multi"><svg viewBox="0 0 24 24"><path d="M6 1h16v20H3V4z" fill="#f8c4ad" stroke="#d9562c"/><text x="4" y="16" font-size="16" font-weight="bold" fill="#cf3e18">P</text><circle cx="17" cy="13" r="3.500" fill="#fff" stroke="#d9562c"/><path d="M12 17l10-1v5l-9 1z" fill="#fff"/></svg></div>
  <div class="task open"><svg viewBox="0 0 24 24"><path d="M2 4h20v16H2z" fill="#9bd0ed" stroke="#286793"/><path d="M2 12l6-1 7 2 7-1v7H2z" fill="#326d63"/><path d="M2 15h20v5H2z" fill="#4285b1"/><path d="M1 8V3h5M18 3h5v5M1 17v4h5M18 21h5v-4" fill="none" stroke="#2d75b0" stroke-width="2"/></svg></div>
  <div class="task open hot"><svg viewBox="0 0 24 24"><path d="M13 5Q3 9 5 16q4 6 10 0 5-8-2-11z" fill="none" stroke="#d6e33b" stroke-width="4"/><path d="M14 16l5 5" stroke="#d6e33b" stroke-width="4"/><path d="M3 20l6-5 9-11" stroke="#174f20" stroke-width="2" fill="none"/><path d="M13 4l7-3-1 7z" fill="#174f20"/></svg></div>
  <div class="task open"><svg viewBox="0 0 24 24"><ellipse cx="10" cy="13" rx="9" ry="7" fill="#dcecf3" stroke="#87aec7"/><circle cx="6" cy="11" r="1.700" fill="#d64b42"/><circle cx="10" cy="9" r="1.700" fill="#63af46"/><circle cx="6" cy="15" r="1.700" fill="#3c7fc9"/><circle cx="10" cy="17" r="1.500" fill="#e8b93a"/><path d="M15 21L21 4" stroke="#c48a50" stroke-width="2"/><path d="M20 5l2-5 1 5z" fill="#e7a951"/></svg></div>
  <div class="tray"><span class="fr">FR</span><span class="batt"><em>100%</em><svg viewBox="0 0 14 12"><path d="M3 3q1-2 6-2h3v10H8q-5 0-5-3H0V5h3z" fill="#111" stroke="#ddd" stroke-width=".7"/><path d="M9 4h4M9 8h4" stroke="#eee"/></svg></span>
    <b class="tup"></b><svg viewBox="0 0 14 14"><path d="M2 2h6v11H2z" fill="#eee" stroke="#666"/><path d="M9 4v3h4V4M11 7v6" fill="none" stroke="#eee" stroke-width="1.500"/></svg>
    <svg viewBox="0 0 14 14"><path d="M1 5h3l4-4v11L4 9H1z" fill="#eee"/><circle cx="9.500" cy="9.500" r="3.700" fill="#fff" stroke="#d32929" stroke-width="1.400"/><path d="M7 7l5 5" stroke="#d32929" stroke-width="1.300"/></svg>
    <svg viewBox="0 0 14 14"><path d="M2 13V10M5 13V8M8 13V5M11 13V2" stroke="#ddd" stroke-width="2"/><path d="M9 6l4 7H5z" fill="#f2c52d"/><path d="M9 8v2M9 11v1" stroke="#333"/></svg>
    <span class="clock">13:11<br>05/04/2018</span><i class="desk"></i></div>
</div>

<svg class="marks" viewBox="0 0 1126 633">
  <g class="pointer" fill="none" stroke="#c0504d" stroke-width="4.500"><path d="M461 222L563 293M1010 117L870 293.500"/></g>
</svg>
<div class="callout">Possibilité de<br>modifier le<br>graphe<br>directement<br>dans la fenêtre<br>3D</div>
<svg class="marks" viewBox="0 0 1126 633"><ellipse cx="1010.200" cy="86.500" rx="64.500" ry="29.600" fill="none" stroke="#f00" stroke-width="4"/></svg>
</body>
</html>
```
FILE: styles.css
```css
* { box-sizing: border-box; }
body { margin: 0; width: 1126px; height: 633px; overflow: hidden; position: relative; display: flex; flex-direction: column; background: #efefef; color: #000; font: 7.6px/10px "Open Sans", "Noto Sans", sans-serif; letter-spacing: -.22px; }
i, em { font-style: normal; }
svg { display: block; flex: none; }
.defs { position: absolute; width: 0; height: 0; }
.serif { font-family: "Liberation Serif", serif; font-weight: bold; letter-spacing: 0; }
.titlebar { position: relative; height: 16px; flex: none; display: flex; align-items: center; border-bottom: 1px solid #6a7f9c; background: linear-gradient(100deg, #b8cbe8 0, #9db9e2 10%, #789fd5 22%, #86a8da 28%, #6f94cc 32%, #88aadd 40%, #8eb2e2 58%, #7396cc 68%, #7c9fce 74%, #93bceb 79%, #a0c8f3); }
.logo { width: 12px; height: 14px; margin-right: 3px; }
.title { font-size: 9px; letter-spacing: -.3px; }
.ghost { position: absolute; left: 427px; top: 3px; width: 275px; white-space: nowrap; font-size: 8.5px; color: #1e3559; opacity: .55; filter: blur(.9px); letter-spacing: -.02px; }
.winbtns { position: absolute; right: 1px; top: 0; display: flex; height: 13.500px; width: 76px; border: 1px solid #5a6b84; border-top: 0; border-radius: 0 0 4px 4px; overflow: hidden; }
.winbtns i { width: 20px; background: linear-gradient(#bccbdd 45%, #879eba 50%, #a9c3de); border-right: 1px solid #62758d; }
.winbtns .min::after { content: ""; display: block; width: 10px; height: 3px; margin: 7px 0 0 5px; background: #fff; border: .5px solid #555; }
.winbtns .max::after { content: ""; display: block; width: 8px; height: 8px; margin: 2px 0 0 5px; border: 2px solid #fff; outline: 1px solid #697789; border-radius: 1px; }
.winbtns .x { flex: 1; border: 0; background: linear-gradient(#dda193 40%, #c23a21 50%, #d97655); color: #fff; font: bold 11px/13px "Open Sans", sans-serif; text-align: center; }
.menu { height: 15px; flex: none; display: flex; align-items: center; gap: 8.550px; padding: 0 6px; border-bottom: 1px solid #d0d0d0; }
.bar { height: 23px; flex: none; display: flex; align-items: center; padding-left: 3px; border-bottom: 1px solid #cfcfcf; border-top: 1px solid #fafafa; }
.bar > svg, .pressed svg, .sections svg { width: 15px; height: 15px; margin: 0 2.770px; }
.grip { flex: none; width: 4px; height: 16px; background: repeating-linear-gradient(135deg, #d2d2d2 0 1px, #f7f7f7 1px 2.500px); }
.grip.wide { margin: 0 2px; }
.grip.far { margin-left: 5px; }
.dd { flex: none; width: 0; height: 0; border: solid transparent; border-width: 3px 2.500px 0; border-top-color: #111; margin: 0 1.200px; }
.dd.dim { border-top-color: #888; margin-right: 4px; }
.dd.mid { margin-right: 3px; }
.dd.ten { margin-right: 3.800px; }
.pressed { flex: none; display: flex; align-items: center; width: 28px; height: 19px; border: 1px solid #8b8b8b; background: linear-gradient(90deg, #d5d5d5 18px, #8b8b8b 18px 19px, #d5d5d5 19px); border-radius: 1px; }
.pressed svg { margin: 0 2px 0 1px; }
.pressed .dd { margin-left: 2px; }
.pressed.one { width: 20px; margin-left: 2px; background: #d5d5d5; }
.bar.albion { height: 22px; border-bottom-color: #c2c2c2; }
.albion > svg { margin: 0 2px 0 1px; width: 15px; }
.combo { display: flex; flex: none; align-items: center; justify-content: space-between; height: 14px; padding: 0 2px 0 3px; border: 1px solid #b5b5b5; border-radius: 2px; background: #fff; }
.c1 { width: 89.500px; margin-left: 2px; } .c2 { width: 88px; }
.sections { display: flex; width: 64px; flex: none; padding-left: 1px; }
.lbl { flex: none; white-space: nowrap; }
.btn { flex: none; display: flex; justify-content: center; align-items: center; height: 17px; border: 1px solid #bbb; border-radius: 2px; background: linear-gradient(#fff, #e6e6e6); }
.xy { width: 18px; margin: 0 5px 0 1px; }
.z { width: 27.500px; }
.slider { flex: none; position: relative; height: 3px; border-radius: 2px; background: #c9c9c9; border: .5px solid #b4b4b4; }
.slider i { position: absolute; top: -4px; width: 7px; height: 9px; border: 1px solid #888; border-radius: 2px 2px 4px 4px; background: #f4f4f4; }
.s1 { width: 245px; } .s1 i { left: 24px; }
.s2 { width: 244px; } .s2 i { left: 0; }
.spin { flex: none; display: flex; align-items: center; justify-content: space-between; height: 13px; background: #fff; border: 1px solid #bbb; border-radius: 2px; padding-left: 2px; }
.spin b { width: 8px; height: 11px; position: relative; background: #eee; }
.spin b::before, .spin b::after { content: ""; position: absolute; left: 1.500px; border: solid transparent; }
.spin b::before { top: 1px; border-width: 0 2.500px 3px; border-bottom-color: #111; }
.spin b::after { bottom: 1px; border-width: 3px 2.500px 0; border-top-color: #111; }
.s3 { width: 29px; margin: 0 5px 0 3px; }
.tr { width: 48px; }
.layers { width: 39px; margin: 0 6px 0 4px; height: 15px; font-size: 7.400px; }
.layers .dd { margin: 6px 0 0; border-width: 3px 2px 0; }
.edge { width: 54.500px; margin-right: 6px; }
.edge:last-child { margin: 0; }
.edge.hot { border-color: #71a2d4; border-width: 1.500px; background: #e2ebf5; }
.work { display: flex; height: 486px; flex: none; }
.left { width: 32px; border-right: 1px solid #ccc; padding-top: 3px; }
.hgrip, .splitgrip { display: block; height: 3px; background: repeating-linear-gradient(135deg, #d2d2d2 0 1px, #f7f7f7 1px 2.500px); margin: 0 3px; }
.hgrip.low { margin: 3px 3px 2px; }
.left div { display: flex; align-items: center; height: 20px; padding-left: 4px; }
.left svg { width: 15.500px; height: 15.500px; }
.left .dd { margin-left: 3.500px; border-width: 3px 3px 0; }
.left .in { padding-left: 8px; }
.docks { width: 430px; display: flex; flex-direction: column; }
.docktitle { height: 14px; display: flex; align-items: center; padding: 0 2px 1px; gap: 2px; flex: none; }
.docktitle i { flex: 1; height: 3px; background: repeating-linear-gradient(135deg, #d2d2d2 0 1px, #f7f7f7 1px 2.500px); }
.docktitle span { margin: 0 1px; }
.docktitle svg { width: 8.500px; height: 9px; }
.docktitle svg:last-child { margin-right: 1px; margin-left: -1px; }
.mesh { width: 427px; height: 249px; background: #b2b2b2; }
.splitgrip { width: 55px; margin-left: 140px; }
.second { height: 13px; }
.layertools { height: 19px; flex: none; display: flex; align-items: center; padding-left: 4px; gap: 4px; }
.layertools svg { width: 11.800px; height: 11.800px; }
.layertools .dd { margin: 0 1px 0 -2px; border-width: 3px 3px 0; }
.tree { position: relative; display: flex; width: 427px; height: 188px; background: #fff; border: 1px solid #b5b5b5; }
.guides { position: absolute; left: 0; top: -1px; width: 50px; height: 187px; }
.rows { flex: 1; position: relative; }
.rows p { display: flex; align-items: center; height: 10.450px; margin: 0; padding-left: 14px; color: #333; }
.rows p b { color: #000; letter-spacing: -.33px; }
.rows p.k { padding-left: 25px; }
.rows p.t { height: 11.200px; }
.rows p.sel { background: linear-gradient(90deg, transparent 5px, #efefef 5px); }
.cb { width: 9px; height: 9px; background: #eee; margin-right: 5px; flex: none; }
.cb.off { background: #fafafa; border: 1px solid #ddd; }
p:not(.k) .cb { margin-right: 3px; }
.ln { width: 10px; height: 3px; margin-right: 4px; } .ln.thin { height: 1px; }
.yel { background: #ecdb7e; } .cya { background: #65e6dc; } .pink { background: #e287a9; } .mint { background: #67dfbb; } .lilac { background: #b5a9e6; } .lime { background: #dce58a; } .teal { background: #8ebfc6; margin-left: 1px; }
.sw { width: 10px; height: 10px; margin-right: 4px; border: .5px solid #777; }
.sw.g { background: #57e2aa; } .sw.o { background: #e6ac55; } .sw.p { background: #b07ad8; } .sw.cell { background: #b2cbaa; margin: 0 4px 0 1px; }
.gi { width: 11px; height: 10px; margin-right: 2.500px; } .gi.big { width: 13px; margin-right: 2px; }
.dot { width: 7px; height: 7px; border: 1px solid #5c86a8; background: #abd4f5; border-radius: 50%; margin: 0 6px 0 3px; }
.meta { width: 11px; height: 11px; margin: 0 4px 0 1px; }
.scroll { width: 9px; border-left: 1px solid #ccc; background: #f4f4f4; display: flex; flex-direction: column; }
.scroll b { height: 9.500px; border: 1px solid #aaa; background: #fafafa; display: flex; justify-content: center; align-items: center; }
.scroll b::after { content: ""; border: solid transparent; border-width: 0 2.500px 3px; border-bottom-color: #111; }
.scroll .down::after { border-width: 3px 2.500px 0; border-top-color: #111; }
.scroll i { margin-top: 99px; height: 58px; border: 1px solid #aaa; background: radial-gradient(circle, #aaa .5px, transparent .7px) center / 2px 2px, linear-gradient(90deg, #fff, #e8e8e8); background-size: 2px 2px, auto; background: linear-gradient(90deg, #fff, #e8e8e8); display: flex; align-items: center; justify-content: center; }
.scroll i::after { content: ""; width: 6px; height: 10px; background: radial-gradient(circle, #aaa .6px, transparent .8px) 0 0 / 2px 2px; }
.map { width: 664px; height: 486px; border: 1px solid #559ce5; border-width: 1.500px; background: #fff; overflow: hidden; }
.map svg { width: 662px; height: 484px; }
.status { height: 20px; flex: none; display: flex; align-items: center; padding-left: 495px; }
.w42 { width: 43px; } .w27 { width: 27px; } .w23 { width: 23px; } .w33 { width: 33px; }
.field { flex: none; height: 13px; border: 1px solid #bbb; border-radius: 2px; background: #fff; text-align: center; line-height: 11px; }
.coord { width: 143px; }
.scale { width: 57px; }
.sicon { width: 12px; height: 12px; }
.mouse { margin: 0 8px 0 3px; } .lock { margin: 0 7px 0 4px; width: 11px; }
.w47 { width: 47px; margin-right: 5px; }
.xm { margin: 0 4px 0 -1px; background: #ddd; width: 10px; height: 10px; }
.crs { margin: 0 3px 0 5px; width: 11px; } .epsg { width: 75px; }
.taskbar { height: 28px; flex: none; display: flex; align-items: stretch; position: relative; padding-top: 1px; border-top: 1px solid #51617e; background: linear-gradient(65deg, #7788b4 0 48%, #8b9bc7 49% 55%, #7b8db9 58% 65%, #8797c2 66% 70%, #7c8dba 71%); }
.start { width: 41px; background: #596f9d; display: flex; padding: 0 0 0 6px; }
.start svg { width: 26px; height: 26px; }
.task { width: 39px; margin: 0 1px; flex: none; display: flex; justify-content: center; align-items: center; }
.task svg { width: 24px; height: 24px; }
.task svg text { font-family: "Liberation Sans", sans-serif; letter-spacing: 0; }
.task.open { background: linear-gradient(135deg, #cfd9ec, #8b9bc4 60%, #a7b5d5); border: 1px solid #4e5d81; border-radius: 2px; background-clip: padding-box; box-shadow: inset 0 0 0 1px #c6d0e5; }
.task.multi { border-right-width: 3px; border-right-style: double; }
.task.hot { background: linear-gradient(#eef2fa, #bac8e2 50%, #e8edf7); }
.tray { position: absolute; right: 0; top: 0; height: 27px; width: 246px; display: flex; align-items: center; color: #fff; background: linear-gradient(90deg, #67799e00, #62749a 12%, #5d6d91); padding-left: 18px; }
.fr { width: 24px; font-size: 8.500px; color: #e8edf7; }
.batt { height: 27px; display: flex; align-items: center; gap: 5px; width: 62px; padding-left: 2px; border-left: 1px solid #9aa8c6; border-top: 1px solid #9aa8c6; border-right: 1px solid #49597b; border-radius: 5px 0 0; }
.batt em { width: 33px; height: 15px; background: linear-gradient(#219b38, #087a20); border: 1px solid #dcebdc; text-align: center; font-size: 9px; line-height: 13px; }
.batt svg { width: 13px; height: 11px; }
.tup { border: solid transparent; border-width: 0 3px 3px; border-bottom-color: #fff; margin: 0 10px 0 5px; }
.tray > svg { width: 13px; height: 13px; margin-right: 5px; }
.clock { width: 50px; padding-left: 5px; text-align: center; font-size: 9px; line-height: 13px; letter-spacing: -.25px; white-space: nowrap; }
.desk { position: absolute; right: 0; top: 0; width: 8px; height: 27px; border: 1px solid #3e4c6c; background: #8291b5; }
.marks { position: absolute; left: 0; top: 0; width: 1126px; height: 633px; pointer-events: none; }
.pointer { filter: drop-shadow(1px 2px 1.500px #0007); }
.callout { position: absolute; left: 561px; top: 149px; width: 311px; height: 287px; border: 4px solid #385d8a; border-radius: 50px; background: #4f81bd; color: #fff; text-align: center; font: 35px/44.800px Lato, sans-serif; letter-spacing: 0; padding: 5px 2px 0 0; }
```
